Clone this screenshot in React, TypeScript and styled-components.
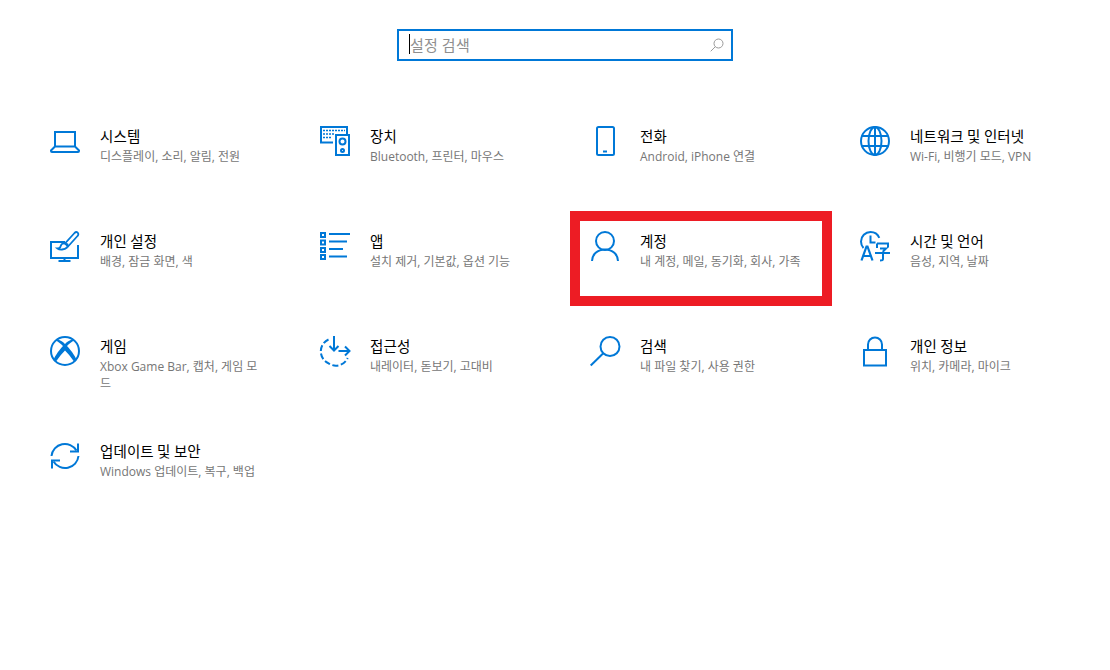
import React from "react";
import styled, { createGlobalStyle } from "styled-components";

const Global = createGlobalStyle`
  html, body { margin: 0; padding: 0; background: #fff; }
  body { font-family: "Noto Sans CJK KR", "Open Sans", sans-serif; }
`;

const Page = styled.div`
  width: 1110px;
  height: 670px;
  overflow: hidden;
  background: #fff;
  padding-top: 29px;
  box-sizing: border-box;
`;

const SearchBox = styled.div`
  position: relative;
  width: 336px;
  height: 32px;
  margin: 0 0 0 397px;
  box-sizing: border-box;
  border: 2px solid #0078d7;
  display: flex;
  align-items: center;
  justify-content: space-between;
  padding: 0 7px 0 11px;
`;

const Caret = styled.span`
  position: absolute;
  left: 10px;
  top: 3px;
  width: 1px;
  height: 20px;
  background: #000;
`;

const Placeholder = styled.span`
  font-size: 15px;
  line-height: 20px;
  letter-spacing: 0.3px;
  color: #8f8f8f;
  font-family: "Noto Sans CJK KR", sans-serif;
`;

const Grid = styled.div`
  display: grid;
  grid-template-columns: repeat(4, 270px);
  grid-auto-rows: 105px;
  padding: 65px 0 0 50px;
`;

const Tile = styled.div`
  position: relative;
  display: flex;
  align-items: flex-start;
  gap: 20px;
`;

const IconSlot = styled.div`
  width: 30px;
  height: 30px;
  flex: none;
  color: #0078d7;
  svg { display: block; overflow: visible; }
`;

const Texts = styled.div`
  width: 166px;
  margin-top: -1px;
`;

const Title = styled.div`
  font-size: 14.5px;
  line-height: 22px;
  color: #000;
  letter-spacing: 0.1px;
`;

const Sub = styled.div`
  font-family: "Open Sans", "Noto Sans CJK KR", sans-serif;
  font-size: 12px;
  line-height: 17px;
  margin-top: 1px;
  color: #767676;
  word-break: break-all;
`;

const Highlight = styled.div`
  position: absolute;
  left: -20px;
  top: -20px;
  width: 262px;
  height: 95px;
  box-sizing: border-box;
  border: 10px solid #ed1c24;
  pointer-events: none;
`;

const Svg: React.FC<{ children: React.ReactNode }> = ({ children }) => (
  <svg width="30" height="30" viewBox="0 0 30 30" fill="none" stroke="currentColor" strokeWidth="2">
    {children}
  </svg>
);

const Laptop = () => (
  <Svg>
    <path d="M5 20.5V6h20v14.5" />
    <path d="M5 20.5 1 24.5V25c0 .5.3 1 1 1h26c.7 0 1-.5 1-1v-.5l-4-4z" />
  </Svg>
);

const Devices = () => (
  <Svg>
    <path d="M13 16.5H1V1h26v7" />
    <rect x="16" y="9" width="13" height="20" />
    <circle cx="22.5" cy="15.5" r="3" />
    <circle cx="22.5" cy="24.5" r="1.5" />
    <path strokeWidth="1.6" strokeDasharray="2 1" d="M3 4.5h22M3 8h11M3 11.5h9" />
  </Svg>
);

const Phone = () => (
  <Svg>
    <rect x="7" y="1" width="17" height="28" rx="1.5" />
    <path d="M13 25.5h4" />
  </Svg>
);

const Globe = () => (
  <Svg>
    <circle cx="15" cy="15" r="14" />
    <ellipse cx="15" cy="15" rx="6.5" ry="14" />
    <path d="M15 1v28M2 10h26M2 20h26" />
  </Svg>
);

const Brush = () => (
  <Svg>
    <path d="M15 11H1v16h27V14" />
    <path d="M14.5 27v3M8.5 30h12" />
    <path strokeWidth="1.8" d="M27.5 1.5c-1-.8-2-.5-3 .5L15 12.5l3 3 9.5-10.5c1-1 1.3-2.5 0-3.5z" />
    <path strokeWidth="1.8" d="M15 12.5c-2.5-.5-4 1-4.5 3-.2 1-1.500 2-3 2 2 1.500 7 1.500 9.500-1 1-1.200 1-2.500.5-3.200z" />
  </Svg>
);

const Apps = () => (
  <Svg>
    <g fill="#0078d7" stroke="none">
      <path fillRule="evenodd" d="M0 1h6v6H0zM2 3v2h2V3z" />
      <path fillRule="evenodd" d="M0 8.500h6v6H0zM2 10.500v2h2v-2z" />
      <path fillRule="evenodd" d="M0 16h6v6H0zM2 18v2h2v-2z" />
      <path fillRule="evenodd" d="M0 23h6v6H0zM2 25v2h2v-2z" />
    </g>
    <path d="M9 3h21M9 10.500h18M9 18h14M9 25.500h18" />
  </Svg>
);

const Person = () => (
  <Svg>
    <circle cx="15" cy="10" r="9" />
    <path d="M2 30c0-6.500 5.500-11.500 13-11.500S28 23.500 28 30" />
  </Svg>
);

const TimeLang = () => (
  <Svg>
    <path d="M3.500 17C1.800 15.200 1 13 1 10.500 1 5.300 5.300 1 10.500 1c4 0 7.300 2.400 8.800 5.800" />
    <path d="M10.500 4.500v7h5" />
    <path d="M1.500 29.500 6.500 15.500h1l5 14M3.500 25h8" strokeWidth="2.200" />
    <path d="M17 12.500h11v4M17 17V12.500M20 17.500h6l-3 3M15 22h15M23 20.500V28c0 1.200-.7 1.500-3 1.500" />
  </Svg>
);

const Xbox = () => (
  <Svg>
    <circle cx="15" cy="15" r="14" />
    <path
      fill="currentColor"
      stroke="none"
      d="M7 3.500c3 .3 5.800 2.200 8 4.500 2.200-2.300 5-4.200 8-4.500 2.500 1.500-1 1-6 6.500 5 5.500 9.500 12 9.500 14.500-2 2-3 .5-4-1-2-3-4.500-6-7.500-9-3 3-5.500 6-7.500 9-1 1.500-2 3-4 1C3.500 22 8 15.500 13 10 8 4.500 4.500 5 7 3.500z"
    />
  </Svg>
);

const Access = () => (
  <Svg>
    <path d="M8.500 3.500A13 13 0 0 0 8 27a13 13 0 0 0 19.700-5" strokeDasharray="6 2.500" />
    <path d="M14 0v14M9.500 10l4.500 4.500 4.500-4.500" />
    <path d="M18.500 15H29M25 10.500l4.500 4.500-4.500 4.500" />
  </Svg>
);

const SearchIcon = () => (
  <Svg>
    <circle cx="20" cy="10.500" r="9.500" />
    <path d="M13.300 17.200 0.700 29.500" />
  </Svg>
);

const Lock = () => (
  <Svg>
    <rect x="4" y="14" width="22" height="15.500" />
    <path d="M8 14V8.500a7 7 0 0 1 14 0V14" />
  </Svg>
);

const Refresh = () => (
  <Svg>
    <path d="M1.500 15a13.500 13.500 0 0 1 25-5.500" />
    <path d="M28.500 15a13.500 13.500 0 0 1-25 5.500" />
    <path d="M28 2.500v8h-8M2 27.500v-8h8" />
  </Svg>
);

const MiniSearch = () => (
  <svg width="14" height="14" viewBox="0 0 14 14" fill="none" stroke="#9a9a9a" strokeWidth="1">
    <circle cx="8.500" cy="5.500" r="4.500" />
    <path d="M5.300 8.700.7 13.300" />
  </svg>
);

const items: { Icon: React.FC; title: string; sub: string; marked?: boolean }[] = [
  { Icon: Laptop, title: "시스템", sub: "디스플레이, 소리, 알림, 전원" },
  { Icon: Devices, title: "장치", sub: "Bluetooth, 프린터, 마우스" },
  { Icon: Phone, title: "전화", sub: "Android, iPhone 연결" },
  { Icon: Globe, title: "네트워크 및 인터넷", sub: "Wi-Fi, 비행기 모드, VPN" },
  { Icon: Brush, title: "개인 설정", sub: "배경, 잠금 화면, 색" },
  { Icon: Apps, title: "앱", sub: "설치 제거, 기본값, 옵션 기능" },
  { Icon: Person, title: "계정", sub: "내 계정, 메일, 동기화, 회사, 가족", marked: true },
  { Icon: TimeLang, title: "시간 및 언어", sub: "음성, 지역, 날짜" },
  { Icon: Xbox, title: "게임", sub: "Xbox Game Bar, 캡처, 게임 모드" },
  { Icon: Access, title: "접근성", sub: "내레이터, 돋보기, 고대비" },
  { Icon: SearchIcon, title: "검색", sub: "내 파일 찾기, 사용 권한" },
  { Icon: Lock, title: "개인 정보", sub: "위치, 카메라, 마이크" },
  { Icon: Refresh, title: "업데이트 및 보안", sub: "Windows 업데이트, 복구, 백업" },
];

export default function App() {
  return (
    <Page>
      <Global />
      <SearchBox>
        <Caret />
        <Placeholder>설정 검색</Placeholder>
        <MiniSearch />
      </SearchBox>
      <Grid>
        {items.map(({ Icon, title, sub, marked }) => (
          <Tile key={title}>
            <IconSlot>
              <Icon />
            </IconSlot>
            <Texts>
              <Title>{title}</Title>
              <Sub>{sub}</Sub>
            </Texts>
            {marked && <Highlight />}
          </Tile>
        ))}
      </Grid>
    </Page>
  );
}
